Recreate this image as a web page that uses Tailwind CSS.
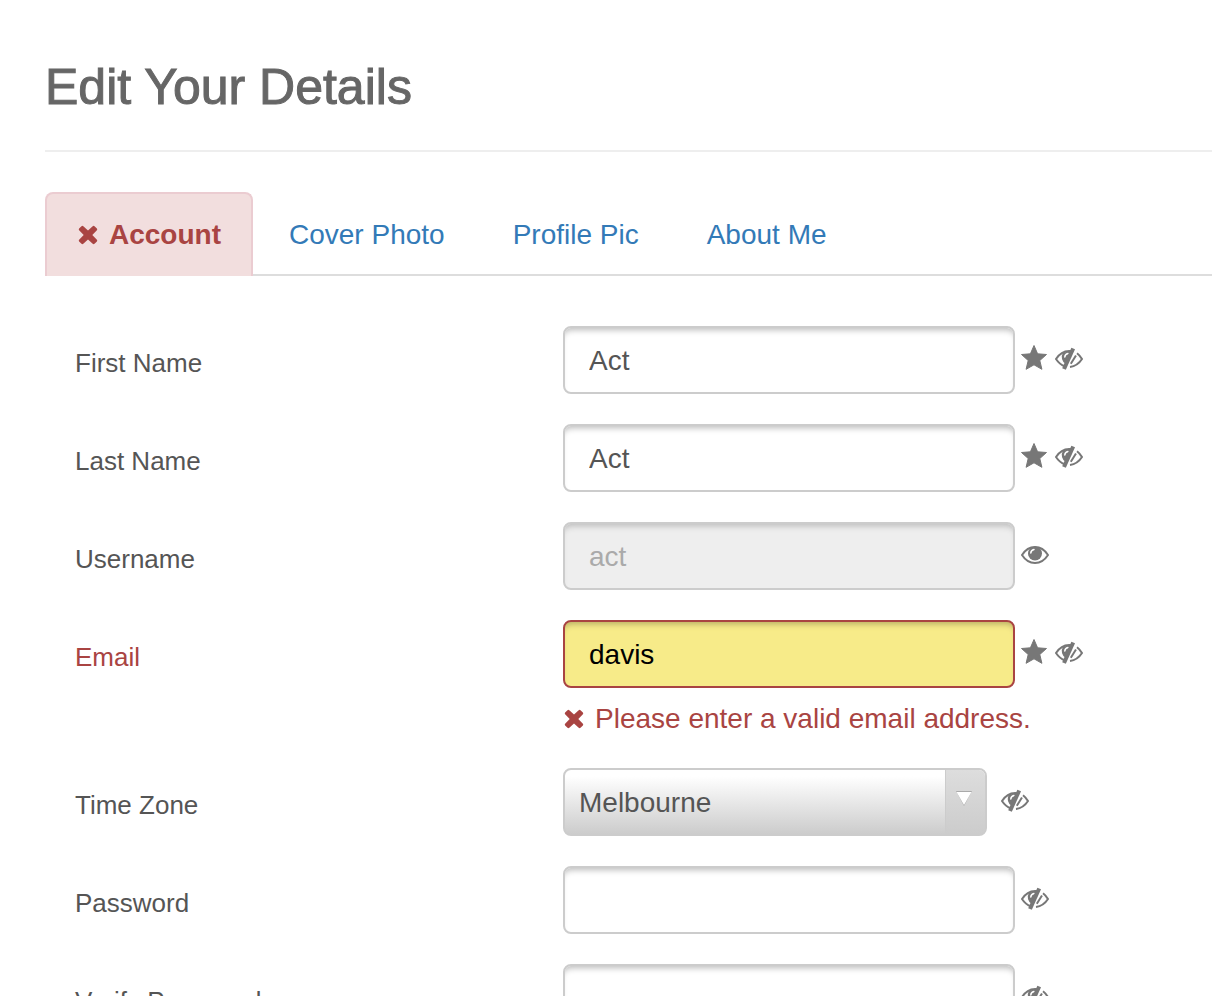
<!DOCTYPE html>
<html lang="en">

<head>
  <meta charset="utf-8">
  <title>Edit Your Details</title>
  <script src="https://cdn.jsdelivr.net/npm/@tailwindcss/browser@4"></script>
</head>

<body class="overflow-x-hidden bg-white pl-[45px] font-['Liberation_Sans',Arial,sans-serif] text-[28px] text-[#555]">

  <!-- icons shared by the tabs and the form rows -->
  <svg class="hidden" xmlns="http://www.w3.org/2000/svg">
    <symbol id="icon-remove" viewBox="0 0 22 22">
      <path fill="currentColor" d="M6.300 2.200 11 6.600 15.700 2.200Q16.600 1.500 17.500 2.200L19.900 4.600Q20.600 5.500 19.900 6.300L15.300 11 19.900 15.700Q20.600 16.500 19.900 17.400L17.500 19.800Q16.600 20.500 15.700 19.800L11 15.400 6.300 19.800Q5.400 20.500 4.500 19.800L2.100 17.400Q1.400 16.500 2.100 15.700L6.700 11 2.100 6.300Q1.400 5.500 2.100 4.600L4.500 2.200Q5.400 1.500 6.300 2.200Z" />
    </symbol>
    <symbol id="icon-star" viewBox="0 0 28 28">
      <path fill="currentColor" stroke="currentColor" stroke-linejoin="round" d="M13 1.500 16.600 9.800 25.500 10.500 18.800 16.500 20.900 25.300 13 20.800 5.100 25.300 7.200 16.500.5 10.500 9.400 9.800Z" />
    </symbol>
    <symbol id="icon-eye" viewBox="0 0 28 28">
      <path fill="none" stroke="currentColor" stroke-width="2" stroke-linejoin="round" d="M1 15C4.500 9.500 9 7 14 7S23.500 9.500 27 15C23.500 20.500 19 23 14 23S4.500 20.500 1 15Z" />
      <circle cx="14" cy="13.500" r="7" fill="currentColor" />
      <path fill="none" stroke="#fff" stroke-width="1.500" stroke-linecap="round" d="M9.800 13Q10 10.300 13 9.600" />
    </symbol>
    <symbol id="icon-eye-off" viewBox="0 0 28 28">
      <path fill="none" stroke="currentColor" stroke-width="2" d="M17 7.200C10 6 4.500 9.500 1 15C3.500 18.800 6.500 21.300 10 22.300" />
      <path fill="currentColor" d="M8 8.500Q6.300 11.500 7 15Q8 19 11.300 20.600L18 7Z" />
      <path fill="none" stroke="#fff" stroke-width="1.500" stroke-linecap="round" d="M9.800 13Q10 10.300 13 9.600" />
      <path fill="none" stroke="currentColor" stroke-width="4" d="M18.200 4.500 9 25" />
      <path fill="none" stroke="currentColor" stroke-width="2" d="M22 9.200Q25 11.500 27 15Q22.500 22 15 23" />
      <path fill="none" stroke="currentColor" stroke-width="2" d="M21 11.500 15.800 19.800" />
    </symbol>
  </svg>

  <header class="border-b-2 border-[#eee] pt-[60px] pb-9">
    <h1 class="text-[50px] leading-[54px] text-[#666] [-webkit-text-stroke:1px_#666]">Edit Your Details</h1>
  </header>

  <nav class="mt-10 flex gap-1 border-b-2 border-[#ddd] leading-10">
    <a href="#account" class="-mb-0.5 flex items-center gap-2.5 rounded-t-lg border-2 border-b-0 border-[#ebccd1] bg-[#f2dede] px-[30px] py-[21px] font-bold text-[#a94442]">
      <svg class="size-[22px]"><use href="#icon-remove" /></svg>Account
    </a>
    <a href="#cover" class="px-8 pt-[23px] pb-[19px] text-[#337ab7]">Cover Photo</a>
    <a href="#picture" class="px-8 pt-[23px] pb-[19px] text-[#337ab7]">Profile Pic</a>
    <a href="#about" class="px-8 pt-[23px] pb-[19px] text-[#337ab7]">About Me</a>
  </nav>

  <form class="flex flex-col gap-[30px] pt-[50px] pl-[30px]">
    <div class="grid grid-cols-[488px_1fr]">
      <label for="first-name" class="pt-[17px] text-[26px] leading-10">First Name</label>
      <div class="flex text-[#777]">
        <input id="first-name" type="text" value="Act" class="h-[68px] w-[452px] rounded-lg border-2 border-[#ccc] px-6 pt-0.5 text-[#555] shadow-[inset_0_6px_6px_-4px_#bbb]">
        <svg class="mt-[18px] ml-1.5 size-7"><use href="#icon-star" /></svg>
        <svg class="mt-[18px] ml-1.5 size-7"><use href="#icon-eye-off" /></svg>
      </div>
    </div>

    <div class="grid grid-cols-[488px_1fr]">
      <label for="last-name" class="pt-[17px] text-[26px] leading-10">Last Name</label>
      <div class="flex text-[#777]">
        <input id="last-name" type="text" value="Act" class="h-[68px] w-[452px] rounded-lg border-2 border-[#ccc] px-6 pt-0.5 text-[#555] shadow-[inset_0_6px_6px_-4px_#bbb]">
        <svg class="mt-[18px] ml-1.5 size-7"><use href="#icon-star" /></svg>
        <svg class="mt-[18px] ml-1.5 size-7"><use href="#icon-eye-off" /></svg>
      </div>
    </div>

    <div class="grid grid-cols-[488px_1fr]">
      <label for="username" class="pt-[17px] text-[26px] leading-10">Username</label>
      <div class="flex text-[#777]">
        <input id="username" type="text" value="act" disabled class="h-[68px] w-[452px] rounded-lg border-2 border-[#ccc] bg-[#eee] px-6 pt-0.5 text-[#aaa] shadow-[inset_0_6px_6px_-4px_#bbb]">
        <svg class="mt-[18px] ml-1.5 size-7"><use href="#icon-eye" /></svg>
      </div>
    </div>

    <div class="grid grid-cols-[488px_1fr]">
      <label for="email" class="pt-[17px] text-[26px] leading-10 text-[#a94442]">Email</label>
      <div>
        <div class="flex text-[#777]">
          <input id="email" type="text" value="davis" aria-describedby="email-error" class="h-[68px] w-[452px] rounded-lg border-2 border-[#a94442] bg-[#f7eb89] px-6 pt-0.5 text-black shadow-[inset_0_6px_6px_-4px_#b5ab62]">
          <svg class="mt-[18px] ml-1.5 size-7"><use href="#icon-star" /></svg>
          <svg class="mt-[18px] ml-1.5 size-7"><use href="#icon-eye-off" /></svg>
        </div>
        <p id="email-error" class="flex items-center gap-2.5 pt-3 leading-[38px] text-[#a94442]">
          <svg class="size-[22px]"><use href="#icon-remove" /></svg>Please enter a valid email address.
        </p>
      </div>
    </div>

    <div class="grid grid-cols-[488px_1fr]">
      <label for="time-zone" class="pt-[17px] text-[26px] leading-10">Time Zone</label>
      <div class="flex text-[#777]">
        <div class="relative">
          <select id="time-zone" class="h-[68px] w-[424px] appearance-none rounded-lg border-2 border-[#ccc] bg-linear-to-b from-white from-10% to-[#ccc] px-3.5 pt-0.5 text-[#555]">
            <option>Melbourne</option>
          </select>
          <span class="pointer-events-none absolute inset-y-0.5 right-0.5 flex w-10 justify-center rounded-r-md border-l border-[#ccc] bg-linear-to-b from-[#ddd] to-[#ccc] pt-5 pr-1">
            <svg class="size-4" viewBox="0 0 16 16"><path fill="#aaa" d="M0 1h16L8 16Z" /><path fill="#fff" d="M.5 2h15L8 15Z" /></svg>
          </span>
        </div>
        <svg class="mt-[18px] ml-3.5 size-7"><use href="#icon-eye-off" /></svg>
      </div>
    </div>

    <div class="grid grid-cols-[488px_1fr]">
      <label for="password" class="pt-[17px] text-[26px] leading-10">Password</label>
      <div class="flex text-[#777]">
        <input id="password" type="password" class="h-[68px] w-[452px] rounded-lg border-2 border-[#ccc] px-6 pt-0.5 text-[#555] shadow-[inset_0_6px_6px_-4px_#bbb]">
        <svg class="mt-[18px] ml-1.5 size-7"><use href="#icon-eye-off" /></svg>
      </div>
    </div>

    <div class="grid grid-cols-[488px_1fr]">
      <label for="verify-password" class="pt-[17px] text-[26px] leading-10">Verify Password</label>
      <div class="flex text-[#777]">
        <input id="verify-password" type="password" class="h-[68px] w-[452px] rounded-lg border-2 border-[#ccc] px-6 pt-0.5 text-[#555] shadow-[inset_0_6px_6px_-4px_#bbb]">
        <svg class="mt-[18px] ml-1.5 size-7"><use href="#icon-eye-off" /></svg>
      </div>
    </div>
  </form>

</body>

</html>
